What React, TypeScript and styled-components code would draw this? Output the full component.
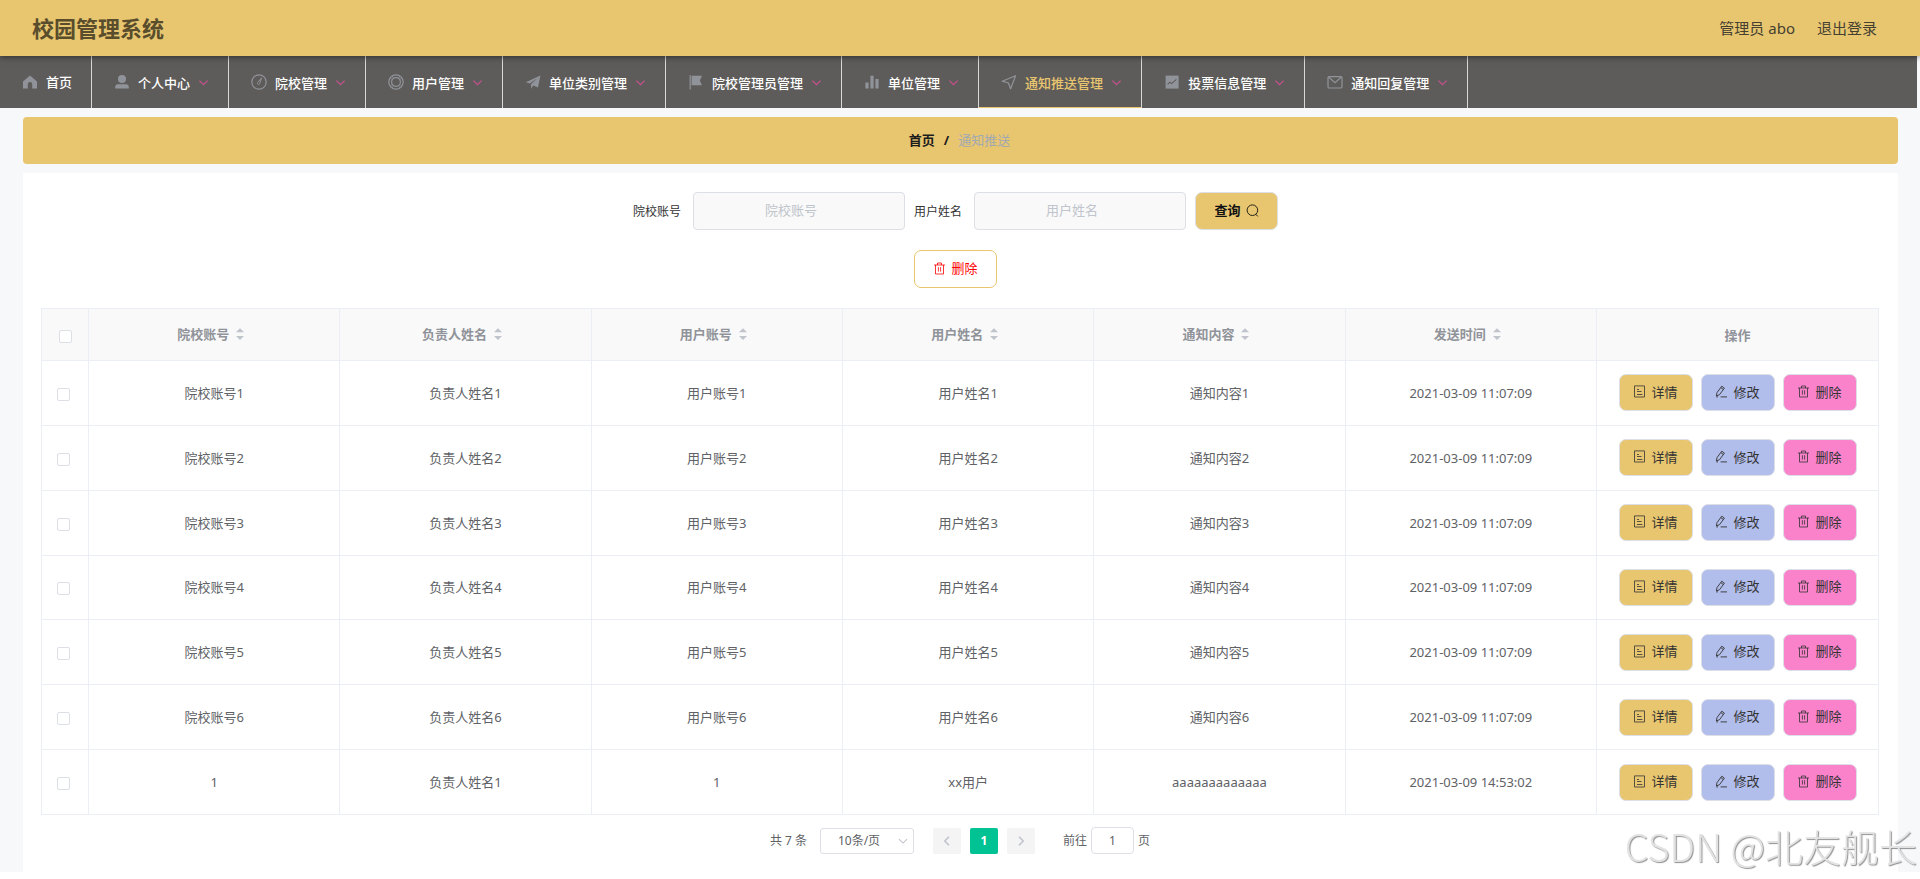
import React from "react";
import styled, { createGlobalStyle } from "styled-components";

const gold = "#e8c670";
const line = "#ebeef5";
const edge = "#dcdfe6";

const Global = createGlobalStyle`
  * { box-sizing: border-box; }
  body {
    margin: 0;
    background: #fff;
    font-family: "Noto Sans", "Noto Sans CJK SC", sans-serif;
    font-size: 13px;
    color: #606266;
  }
  button, input, select { font: inherit; color: inherit; margin: 0; }
  a { color: inherit; text-decoration: none; }
`;

const Page = styled.div`
  background: #f7f8fa;
`;

const Header = styled.header`
  position: relative;
  z-index: 1;
  display: flex;
  align-items: center;
  justify-content: space-between;
  height: 56px;
  padding: 0 43px 0 32px;
  background: ${gold};
  box-shadow: 0 1px 6px rgba(0, 0, 0, 0.5);
  color: #5a4d2c;
`;

const Title = styled.h1`
  margin: 0;
  font-size: 22px;
  line-height: 32px;
  font-weight: 700;
`;

const Account = styled.div`
  display: flex;
  gap: 22px;
  font-size: 15px;
  line-height: 24px;
  color: #454030;
`;

const Nav = styled.nav`
  display: flex;
  height: 52px;
  margin-right: 3px;
  background: #5e5c5a;
`;

const NavItem = styled.a<{ $active?: boolean }>`
  display: flex;
  align-items: center;
  flex: none;
  padding: 0 19px;
  border-right: 1px solid #d8d8d8;
  box-shadow: ${(p) => (p.$active ? `inset 0 -1px 0 ${gold}` : "none")};
  color: ${(p) => (p.$active ? gold : "#fff")};
  font-weight: 500;
  line-height: 20px;
  white-space: nowrap;
`;

const NavIcon = styled.svg`
  flex: none;
  width: 22px;
  height: 16px;
  margin-right: 5px;
  color: #909399;
`;

const NavLabel = styled.span<{ $sub: boolean }>`
  padding-top: ${(p) => (p.$sub ? "2px" : "0")};
`;

const NavArrow = styled.svg`
  width: 11px;
  height: 11px;
  margin-left: 8px;
  color: #c8508e;
`;

const Main = styled.main`
  padding: 9px 22px 8px 23px;
  padding-bottom: 0;
`;

const Crumbs = styled.nav`
  display: flex;
  align-items: center;
  justify-content: center;
  gap: 9px;
  height: 47px;
  padding: 0 2px 2px 0;
  border-radius: 4px;
  background: ${gold};
  color: #1c1c1c;
  font-weight: 700;
  line-height: 20px;
`;

const Current = styled.span`
  color: #a3a9b1;
  font-weight: 400;
`;

const Panel = styled.section`
  margin-top: 9px;
  padding: 19px 19px 18px 18px;
  background: #fff;
`;

const Search = styled.form`
  display: flex;
  justify-content: center;
  gap: 9px;
  margin-right: 9px;
`;

const Field = styled.label`
  display: flex;
  align-items: center;
  gap: 12px;
  font-size: 12px;
  color: #333;
`;

const TextInput = styled.input`
  width: 212px;
  height: 38px;
  padding: 0 28px 2px 12px;
  border: 1px solid ${edge};
  border-radius: 4px;
  background: #f9f9f9;
  font-size: 13px;
  text-align: center;
  &::placeholder { color: #c0c4cc; }
`;

const Button = styled.button<{ $bg: string; $fg?: string; $edge?: string; $wide?: boolean; $bold?: boolean }>`
  display: flex;
  align-items: center;
  justify-content: center;
  gap: 5px;
  width: ${(p) => (p.$wide ? "83px" : "74px")};
  height: ${(p) => (p.$wide ? "38px" : "37px")};
  padding: 0 0 2px;
  border: 1px solid ${(p) => p.$edge ?? edge};
  border-radius: 7px;
  background: ${(p) => p.$bg};
  color: ${(p) => p.$fg ?? "#333"};
  font-weight: ${(p) => (p.$bold ? 700 : 400)};
  line-height: 20px;
  white-space: nowrap;
  svg { width: 13px; height: 13px; }
`;

const Batch = styled.div`
  display: flex;
  justify-content: center;
  margin: 20px 9px 20px 0;
`;

const Table = styled.table`
  width: 100%;
  height: 507px;
  table-layout: fixed;
  border-collapse: collapse;
  text-align: center;
  line-height: 20px;
  th, td { padding: 0; border: 1px solid ${line}; }
  th { height: 52px; background: #f9f9f9; color: #909399; font-weight: 700; }
  th:first-child { width: 47px; }
  th:last-child { width: 282px; }
  td:first-child { padding-right: 3px; }
`;

const Check = styled.input`
  appearance: none;
  display: block;
  width: 13px;
  height: 13px;
  margin: 3px auto 0;
  border: 1px solid ${edge};
  border-radius: 2px;
  background: #fff;
`;

const SortHead = styled.div`
  display: flex;
  align-items: center;
  justify-content: center;
  padding-bottom: 2px;
  svg { width: 22px; height: 12px; color: #c0c4cc; }
`;

const Actions = styled.div`
  display: flex;
  justify-content: center;
  gap: 8px;
`;

const Pager = styled.div`
  display: flex;
  align-items: center;
  justify-content: center;
  margin-top: 12px;
  font-size: 12px;
  line-height: 20px;
`;

const SizeBox = styled.span`
  display: grid;
  align-items: center;
  width: 94px;
  margin: 0 19px 0 13px;
  > * { grid-area: 1 / 1; }
  svg { justify-self: end; width: 10px; height: 10px; margin-right: 6px; color: #c0c4cc; pointer-events: none; }
`;

const Size = styled.select`
  appearance: none;
  width: 94px;
  height: 26px;
  padding: 0 16px 0 0;
  border: 1px solid ${edge};
  border-radius: 3px;
  background: #fff;
  text-align: center;
  text-align-last: center;
`;

const PageButton = styled.button<{ $on?: boolean }>`
  display: flex;
  align-items: center;
  justify-content: center;
  width: 28px;
  height: 26px;
  margin-right: 9px;
  padding: 0;
  border: 0;
  border-radius: 2px;
  background: ${(p) => (p.$on ? "#00c292" : "#f4f4f5")};
  color: ${(p) => (p.$on ? "#fff" : "#c0c4cc")};
  font-weight: 700;
  svg { width: 12px; height: 12px; }
`;

const Jump = styled.label`
  display: flex;
  align-items: center;
  gap: 4px;
  margin-left: 19px;
`;

const JumpInput = styled.input`
  width: 43px;
  height: 27px;
  padding: 0;
  border: 1px solid ${edge};
  border-radius: 4px;
  text-align: center;
`;

const Watermark = styled.div`
  position: fixed;
  right: 3px;
  bottom: 6px;
  font-family: "Noto Sans CJK SC", sans-serif;
  font-size: 38px;
  font-weight: 300;
  line-height: 54px;
  color: #e2e2e2;
  text-shadow: 1px 1px 1px #909090;
  pointer-events: none;
`;

const stroke = { fill: "none", stroke: "currentColor", strokeWidth: 1.2 } as const;

const icons: Record<string, React.ReactNode> = {
  home: <path fill="currentColor" d="M11 1.6 18 7.6V14.4H13.2V10.2A2.2 2.2 0 0 0 8.8 10.2V14.4H4V7.6Z" />,
  user: (
    <g fill="currentColor">
      <circle cx="11" cy="5" r="4" />
      <path d="M4.2 14.6V12.8A2.8 2.8 0 0 1 7 10.2H15A2.8 2.8 0 0 1 17.8 12.8V14.6Z" />
    </g>
  ),
  gauge: (
    <g {...stroke}>
      <circle cx="11" cy="8" r="7.2" />
      <path d="M13.6 3.8 11.8 9.2A1.2 1.2 0 1 1 9.8 8.4Z" strokeWidth="1" />
    </g>
  ),
  help: (
    <g {...stroke}>
      <circle cx="11" cy="8" r="7.2" />
      <circle cx="11" cy="8" r="4.4" />
      <path d="M7.2 2 8.6 4.4M14.8 2 13.4 4.4M7.2 14 8.6 11.6M14.8 14 13.4 11.6M5 4.2 7.6 5.4M17 4.2 14.4 5.4M5 11.8 7.6 10.6M17 11.8 14.4 10.6" strokeWidth="0.7" />
    </g>
  ),
  plane: <path fill="currentColor" d="M18.4 1.4 3.8 8.2 7.8 9.6 15.6 4 9 10.2V14.8L11.2 11.4 16 13.6Z" />,
  flag: <path fill="currentColor" d="M4.6 1H5.8V15.4H4.6ZM6.6 1.8H17L14.8 6.4 17 11.2H6.6Z" />,
  bars: <path fill="currentColor" d="M4.4 8.4H7.6V14.6H4.4ZM9.4 1.8H12.6V14.6H9.4ZM14.4 5H17.6V14.6H14.4Z" />,
  send: <path {...stroke} strokeLinejoin="round" d="M17.6 1.8 4.2 7.2 10.4 9 12.6 14.8Z" />,
  trend: (
    <g>
      <rect x="4.6" y="1.6" width="13" height="13" fill="currentColor" />
      <path d="M6.6 10.4 9 8.2 10.6 9.6 15.4 5.4" fill="none" stroke="#5e5c5a" strokeWidth="1.1" />
    </g>
  ),
  mail: (
    <g {...stroke}>
      <rect x="4" y="2.6" width="14" height="11.4" rx="1.2" />
      <path d="M4.6 3 11 8.8 17.4 3" />
    </g>
  ),
};

const Trash = () => (
  <svg viewBox="0 0 13 13" {...stroke} strokeWidth={0.8} aria-hidden="true">
    <path d="M1 3H12M4.5 3V1H8.5V3M2.5 3V12H10.5V3M5.4 5.2V9.6M7.6 5.2V9.6" />
  </svg>
);
const Doc = () => (
  <svg viewBox="0 0 13 13" {...stroke} strokeWidth={0.8} aria-hidden="true">
    <path d="M1.5 0.9H11.5V12H1.5ZM4 4.5H6M4 6.5H8.6M4 9.5H9.4" />
  </svg>
);
const Pen = () => (
  <svg viewBox="0 0 13 13" {...stroke} strokeWidth={0.9} strokeLinejoin="round" aria-hidden="true">
    <path d="M1.4 11 2 7.6 6.8 1.2 9.4 3.1 4.6 9.6ZM5.8 2.6 8.4 4.5M1.4 11.9H3M5.6 11.9H12" />
  </svg>
);
const Glass = () => (
  <svg viewBox="0 0 13 13" {...stroke} strokeWidth={0.9} aria-hidden="true">
    <circle cx="6.4" cy="6.2" r="5.3" />
    <path d="M9.8 10.2 11.8 12.4" />
  </svg>
);
const Sort = () => (
  <svg viewBox="0 0 22 12" fill="currentColor" aria-hidden="true">
    <path d="M7 4.2 11 0.2 15 4.2ZM7 8 11 12 15 8Z" />
  </svg>
);

const menu = [
  ["home", "首页"],
  ["user", "个人中心"],
  ["gauge", "院校管理"],
  ["help", "用户管理"],
  ["plane", "单位类别管理"],
  ["flag", "院校管理员管理"],
  ["bars", "单位管理"],
  ["send", "通知推送管理"],
  ["trend", "投票信息管理"],
  ["mail", "通知回复管理"],
];

const columns = ["院校账号", "负责人姓名", "用户账号", "用户姓名", "通知内容", "发送时间"];

const rows = [
  ...[1, 2, 3, 4, 5, 6].map((n) => [
    `院校账号${n}`,
    `负责人姓名${n}`,
    `用户账号${n}`,
    `用户姓名${n}`,
    `通知内容${n}`,
    "2021-03-09 11:07:09",
  ]),
  ["1", "负责人姓名1", "1", "xx用户", "aaaaaaaaaaaaa", "2021-03-09 14:53:02"],
];

export default function App() {
  return (
    <Page>
      <Global />
      <Header>
        <Title>校园管理系统</Title>
        <Account>
          <span>管理员 abo</span>
          <a href="#logout">退出登录</a>
        </Account>
      </Header>
      <Nav>
        {menu.map(([icon, label], i) => (
          <NavItem key={label} href={`#${icon}`} $active={icon === "send"}>
            <NavIcon viewBox="0 0 22 16" aria-hidden="true">{icons[icon]}</NavIcon>
            <NavLabel $sub={i > 0}>{label}</NavLabel>
            {i > 0 && (
              <NavArrow viewBox="0 0 11 11" {...stroke} aria-hidden="true">
                <path d="M1.4 3.6 5.5 7.6 9.6 3.6" />
              </NavArrow>
            )}
          </NavItem>
        ))}
      </Nav>
      <Main>
        <Crumbs>
          <a href="#home">首页</a>
          <span>/</span>
          <Current>通知推送</Current>
        </Crumbs>
        <Panel>
          <Search onSubmit={(e) => e.preventDefault()}>
            <Field>
              院校账号
              <TextInput placeholder="院校账号" />
            </Field>
            <Field>
              用户姓名
              <TextInput placeholder="用户姓名" />
            </Field>
            <Button type="submit" $bg={gold} $fg="#111" $wide $bold>
              查询
              <Glass />
            </Button>
          </Search>
          <Batch>
            <Button type="button" $bg="#fff" $fg="#f00" $edge={gold} $wide>
              <Trash />
              删除
            </Button>
          </Batch>
          <Table>
            <thead>
              <tr>
                <th><Check type="checkbox" aria-label="全选" /></th>
                {columns.map((c) => (
                  <th key={c}>
                    <SortHead>{c}<Sort /></SortHead>
                  </th>
                ))}
                <th>操作</th>
              </tr>
            </thead>
            <tbody>
              {rows.map((row, i) => (
                <tr key={i}>
                  <td><Check type="checkbox" aria-label={`选择第${i + 1}行`} /></td>
                  {row.map((cell, j) => <td key={j}>{cell}</td>)}
                  <td>
                    <Actions>
                      <Button type="button" $bg={gold}><Doc />详情</Button>
                      <Button type="button" $bg="#b1bdea"><Pen />修改</Button>
                      <Button type="button" $bg="#fa82cb"><Trash />删除</Button>
                    </Actions>
                  </td>
                </tr>
              ))}
            </tbody>
          </Table>
          <Pager>
            <span>共 7 条</span>
            <SizeBox>
              <Size aria-label="每页条数">
                <option>10条/页</option>
              </Size>
              <svg viewBox="0 0 11 11" {...stroke} aria-hidden="true">
                <path d="M1 3.4 5.5 7.8 10 3.4" />
              </svg>
            </SizeBox>
            <PageButton type="button" aria-label="上一页">
              <svg viewBox="0 0 12 12" {...stroke} strokeWidth={1.6} aria-hidden="true"><path d="M8 1.8 3.8 6 8 10.2" /></svg>
            </PageButton>
            <PageButton type="button" $on>1</PageButton>
            <PageButton type="button" aria-label="下一页">
              <svg viewBox="0 0 12 12" {...stroke} strokeWidth={1.6} aria-hidden="true"><path d="M4 1.8 8.2 6 4 10.2" /></svg>
            </PageButton>
            <Jump>
              前往
              <JumpInput defaultValue="1" />
              页
            </Jump>
          </Pager>
        </Panel>
      </Main>
      <Watermark>CSDN @北友舰长</Watermark>
    </Page>
  );
}
